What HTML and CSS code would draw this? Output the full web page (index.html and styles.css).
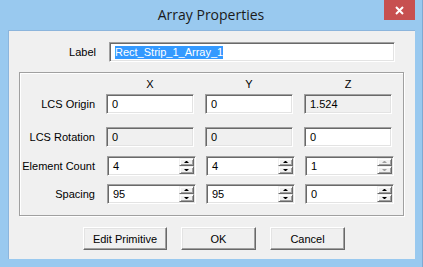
FILE: index.html
```html
<!DOCTYPE html>
<html lang="en">
<head>
  <title>Array Properties</title>
  <link rel="stylesheet" href="styles.css">
</head>
<body>
  <div class="window">
    <div class="titlebar">
      <div></div>
      <div class="title">Array Properties</div>
      <div class="close">
        <svg width="9" height="9" viewBox="0 0 9 9"><path d="M1 1 L8 8 M8 1 L1 8" stroke="#fff" stroke-width="2"/></svg>
      </div>
    </div>

    <div class="client">
      <div class="label-row">
        <span class="caption">Label</span>
        <div class="edit label-edit"><span class="sel">Rect_Strip_1_Array_1</span></div>
      </div>

      <div class="group">
        <div class="grid head">
          <span></span>
          <span class="col-title">X</span>
          <span class="col-title">Y</span>
          <span class="col-title">Z</span>
        </div>

        <div class="grid row-origin">
          <span class="caption">LCS Origin</span>
          <div class="edit">0</div>
          <div class="edit">0</div>
          <div class="edit disabled">1.524</div>
        </div>

        <div class="grid row-rotation">
          <span class="caption">LCS Rotation</span>
          <div class="edit disabled">0</div>
          <div class="edit disabled">0</div>
          <div class="edit">0</div>
        </div>

        <div class="grid row-count">
          <span class="caption">Element Count</span>
          <div class="edit spin"><span class="val">4</span><div class="spinner"><i class="up"></i><i class="down"></i></div></div>
          <div class="edit spin"><span class="val">4</span><div class="spinner"><i class="up"></i><i class="down"></i></div></div>
          <div class="edit spin"><span class="val">1</span><div class="spinner off"><i class="up"></i><i class="down"></i></div></div>
        </div>

        <div class="grid row-spacing">
          <span class="caption">Spacing</span>
          <div class="edit spin"><span class="val">95</span><div class="spinner"><i class="up"></i><i class="down"></i></div></div>
          <div class="edit spin"><span class="val">95</span><div class="spinner"><i class="up"></i><i class="down"></i></div></div>
          <div class="edit spin"><span class="val">0</span><div class="spinner"><i class="up"></i><i class="down"></i></div></div>
        </div>
      </div>

      <div class="buttons">
        <button class="btn btn-wide">Edit Primitive</button>
        <button class="btn">OK</button>
        <button class="btn">Cancel</button>
      </div>
    </div>
  </div>
</body>
</html>
```

FILE: styles.css
```css
body {
  margin: 0;
  padding: 0;
  font-family: "Liberation Sans", Arial, sans-serif;
  font-size: 11px;
  color: #000;
  background-color: #99c9ef;
}

.window {
  width: 423px;
  height: 267px;
  box-sizing: border-box;
  border-right: 1px solid #7fa9d2;
  background-color: #99c9ef;
}

/* barra de titol */
.titlebar {
  height: 30px;
  display: grid;
  grid-template-columns: 1fr auto 1fr;
}

.title {
  font-family: "Open Sans", sans-serif;
  font-size: 14px;
  line-height: 30px;
  color: #1a1a1a;
}

.close {
  justify-self: end;
  margin-right: 7px;
  width: 31px;
  height: 20px;
  background-color: #c75050;
  display: flex;
  align-items: center;
  justify-content: center;
}

.client {
  margin-left: 8px;
  width: 407px;
  height: 229px;
  box-sizing: border-box;
  background-color: #f0f0f0;
  border-top: 1px solid #8cb5dc;
  border-left: 1px solid #8cb5dc;
  overflow: hidden;
}

.label-row {
  display: flex;
  align-items: center;
  margin-top: 11px;
}

.label-row .caption {
  width: 87px;
  text-align: right;
  margin-right: 13px;
}

.edit {
  height: 20px;
  box-sizing: border-box;
  background-color: #fff;
  border-top: 1px solid #a0a0a0;
  border-left: 1px solid #a0a0a0;
  border-bottom: 1px solid #fff;
  border-right: 1px solid #fff;
  box-shadow: inset 1px 1px #696969, inset -1px -1px #e3e3e3;
  padding-left: 5px;
  line-height: 18px;
  white-space: nowrap;
}

.edit.disabled {
  background-color: #f0f0f0;
}

.label-edit {
  width: 286px;
}

.sel {
  display: inline-block;
  background-color: #3399ff;
  color: #fff;
  line-height: 13px;
}

/* grup de propietats */
.group {
  margin-top: 10px;
  margin-left: 10px;
  width: 383px;
  height: 142px;
  border: 1px solid #a0a0a0;
  box-shadow: inset 1px 1px #fff, 1px 1px #fff;
}

.grid {
  display: grid;
  grid-template-columns: 75px 88px 88px 88px;
  column-gap: 11px;
  align-items: center;
}

.grid .caption {
  text-align: right;
}

.head {
  margin-top: 4px;
  height: 14px;
  line-height: 14px;
}

.col-title {
  text-align: center;
}

.row-origin { margin-top: 3px; }
.row-rotation { margin-top: 13px; }
.row-count { margin-top: 9px; }
.row-spacing { margin-top: 8px; }

.spin {
  width: 89px;
  margin-left: 1px;
  display: flex;
  padding-right: 1px;
}

.spin .val {
  flex: 1;
}

.spinner {
  width: 15px;
  padding-top: 1px;
  display: flex;
  flex-direction: column;
}

.spinner i {
  height: 8px;
  box-sizing: border-box;
  background-color: #f0f0f0;
  border: 1px solid;
  border-color: #f0f0f0 #696969 #696969 #f0f0f0;
  box-shadow: inset 1px 1px #fff, inset -1px -1px #a0a0a0;
  display: flex;
  align-items: center;
  justify-content: center;
}

.spinner i::after {
  content: "";
  width: 1px;
  height: 0;
  border-left: 2px solid transparent;
  border-right: 2px solid transparent;
}

.spinner .up::after {
  border-bottom: 2px solid #000;
}

.spinner .down::after {
  border-top: 2px solid #000;
}

.spinner.off .up::after {
  border-bottom-color: #a0a0a0;
}

.spinner.off .down::after {
  border-top-color: #a0a0a0;
}

/* botons */
.buttons {
  display: flex;
  gap: 14px;
  margin-top: 11px;
  padding-left: 74px;
}

.btn {
  width: 75px;
  height: 23px;
  font-family: "Liberation Sans", Arial, sans-serif;
  font-size: 11px;
  color: #000;
  background-color: #f0f0f0;
  border: 1px solid;
  border-color: #fff #696969 #696969 #fff;
  box-shadow: inset -1px -1px #a0a0a0, inset 1px 1px #e3e3e3;
  padding: 0;
}

.btn-wide {
  width: 84px;
}
```
